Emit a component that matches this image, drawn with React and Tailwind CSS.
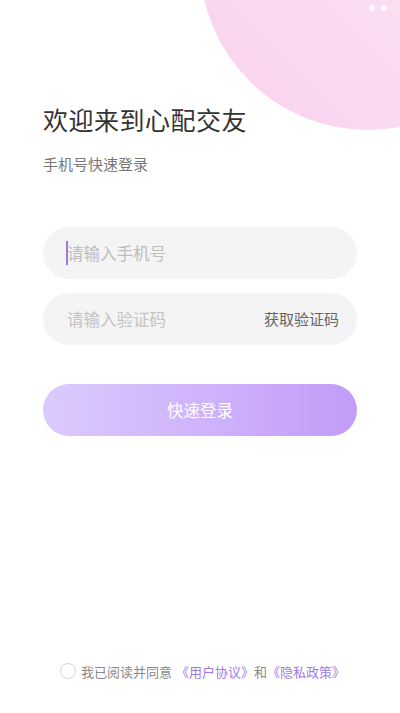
import React from "react";

export default function App() {
  const font = { fontFamily: '"Noto Sans CJK SC", "Noto Sans", sans-serif' };
  return (
    <div
      className="relative w-[400px] h-[713px] overflow-hidden bg-white flex flex-col"
      style={font}
    >
      {/* decorative circle */}
      <div className="absolute left-[200px] top-[-206px] w-[336px] h-[336px] rounded-full bg-gradient-to-tr from-[#f8d1ee] via-[#fbdef4] to-[#fdeff9]" />
      <div className="absolute top-[5px] right-[13px] flex gap-[6px]">
        <span className="w-[6px] h-[6px] rounded-full bg-white/80" />
        <span className="w-[6px] h-[6px] rounded-full bg-white/80" />
      </div>

      <div className="relative flex flex-col px-[43px] pt-[102px]">
        <h1 className="text-[25px] leading-[34px] text-[#333333] font-normal tracking-[0.5px]">
          欢迎来到心配交友
        </h1>
        <p className="mt-[18px] text-[15px] leading-[20px] text-[#777777]">
          手机号快速登录
        </p>

        <div className="mt-[53px] flex flex-col gap-[14px]">
          <div className="h-[52px] rounded-full bg-[#f4f4f4] flex items-center pl-[23px] pr-[18px]">
            <span className="w-[2px] h-[24px] bg-[#9b7ad8] mr-[-1px]" />
            <span className="text-[16.5px] text-[#bdbdbd]">请输入手机号</span>
          </div>
          <div className="h-[52px] rounded-full bg-[#f4f4f4] flex items-center justify-between pl-[24px] pr-[18px]">
            <span className="text-[16.5px] text-[#c4c4c4]">请输入验证码</span>
            <span className="text-[15px] text-[#666666]">获取验证码</span>
          </div>
        </div>

        <button className="mt-[39px] h-[52px] rounded-full bg-gradient-to-r from-[#dccafd] to-[#c29cf8] text-white text-[16.5px] flex items-center justify-center">
          快速登录
        </button>
      </div>

      <div className="relative mt-auto mb-[32px] flex items-center pl-[60px]">
        <span className="w-[16px] h-[16px] rounded-full border border-[#d4d4d4] mr-[5px]" />
        <span className="text-[13px] text-[#8a8a8a]">我已阅读并同意</span>
        <span className="text-[13px] text-[#a07ae6] ml-[4px]">《用户协议》</span>
        <span className="text-[13px] text-[#8a8a8a]">和</span>
        <span className="text-[13px] text-[#a07ae6]">《隐私政策》</span>
      </div>
    </div>
  );
}
